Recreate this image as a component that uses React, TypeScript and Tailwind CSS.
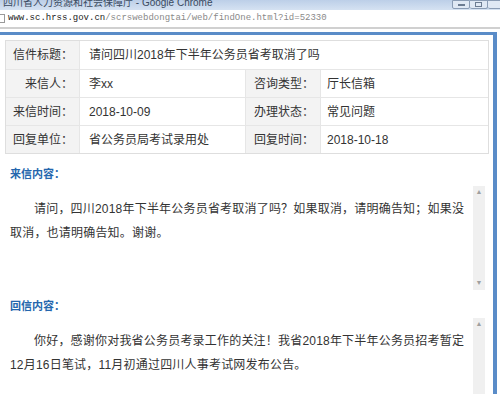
import React from 'react';

interface InfoRow {
  label: string;
  value: string;
  label2?: string;
  value2?: string;
}

const rows: InfoRow[] = [
  { label: '信件标题：', value: '请问四川2018年下半年公务员省考取消了吗' },
  { label: '来信人：', value: '李xx', label2: '咨询类型：', value2: '厅长信箱' },
  { label: '来信时间：', value: '2018-10-09', label2: '办理状态：', value2: '常见问题' },
  { label: '回复单位：', value: '省公务员局考试录用处', label2: '回复时间：', value2: '2018-10-18' },
];

const Scrollbar: React.FC<{ full?: boolean }> = ({ full }) => (
  <div className="w-[12px] bg-[#f0f0f0] flex flex-col justify-between items-center">
    <span className="text-[7px] leading-[10px] text-[#a0a0a0] mt-[1px]">▲</span>
    {!full && <span className="text-[7px] leading-[10px] text-[#a0a0a0] mb-[2px]">▼</span>}
  </div>
);

const Section: React.FC<{ title: string; text: string; full?: boolean }> = ({ title, text, full }) => (
  <div className="flex flex-col pl-[10px] pr-[8px]">
    <div className="text-[11px] leading-[12px] font-bold text-[#2466ad]">{title}</div>
    <div className={`flex gap-[3px] mt-[6px] ${full ? 'h-[90px]' : 'h-[104px]'}`}>
      <p className="w-[460px] text-[12px] leading-[24px] tracking-[0.2px] indent-[24px] pt-[11px] text-[#333]">
        {text}
      </p>
      <Scrollbar full={full} />
    </div>
  </div>
);

const App: React.FC = () => {
  return (
    <div className="w-[500px] h-[394px] overflow-hidden bg-white font-['Liberation_Sans','Noto_Sans_CJK_SC',sans-serif] text-[#333]">
      {/* Window title bar */}
      <div className="h-[10px] bg-gradient-to-b from-[#bccfe8] to-[#d5e2f2] flex justify-between overflow-hidden">
        <span className="text-[10px] leading-[12px] text-[#3a4a60] pl-[3px] mt-[-3px] whitespace-nowrap">
          四川省人力资源和社会保障厅 - Google Chrome
        </span>
        <div className="flex mr-[-6px]">
          <div className="w-[18px] h-[9px] border border-[#8a9cb5] bg-[#dfe8f4] rounded-b-[2px] flex justify-center items-end">
            <div className="w-[7px] h-[2px] bg-[#6c7c92] mb-[2px]" />
          </div>
          <div className="w-[18px] h-[9px] border border-l-0 border-[#8a9cb5] bg-[#dfe8f4] rounded-b-[2px] flex justify-center items-center">
            <div className="w-[7px] h-[5px] border border-[#6c7c92]" />
          </div>
          <div className="w-[18px] h-[9px] border border-l-0 border-[#8a9cb5] bg-[#dfe8f4] rounded-b-[2px]" />
        </div>
      </div>

      {/* Address bar */}
      <div className="h-[19px] bg-white flex items-center border-b-[2px] border-[#d0d0d0]">
        <div className="w-[5px] h-[9px] border border-l-0 border-[#9a9a9a]" />
        <span className="ml-[3px] font-['Liberation_Mono',monospace] text-[9px] whitespace-nowrap">
          <span className="text-[#222]">www.sc.hrss.gov.cn</span>
          <span className="text-[#8a8a8a]">/scrswebdongtai/web/findOne.html?id=52330</span>
        </span>
      </div>

      {/* Page frame */}
      <div className="mt-[3px] mr-[3px] border-t-[3px] border-r-[4px] border-[#5a8cc8] h-[400px]">
        <div className="ml-[5px] mr-[4px] mt-[5px] border border-[#dedede] grid grid-cols-[73px_166px_75px_1fr] text-[12px]">
          {rows.map((row, i) => (
            <React.Fragment key={i}>
              <div className={`h-[28px] bg-[#f3f3f3] flex items-center justify-end pr-[6px] ${i > 0 ? 'border-t border-[#e6e6e6]' : ''}`}>
                {row.label}
              </div>
              {row.label2 ? (
                <>
                  <div className={`h-[28px] flex items-center pl-[9px] border-l border-[#e6e6e6] ${i > 0 ? 'border-t' : ''}`}>
                    {row.value}
                  </div>
                  <div className={`h-[28px] bg-[#f3f3f3] flex items-center justify-end pr-[6px] border-l border-[#e6e6e6] ${i > 0 ? 'border-t' : ''}`}>
                    {row.label2}
                  </div>
                  <div className={`h-[28px] flex items-center pl-[6px] border-l border-[#e6e6e6] ${i > 0 ? 'border-t' : ''}`}>
                    {row.value2}
                  </div>
                </>
              ) : (
                <div className="col-span-3 h-[28px] flex items-center pl-[9px] border-l border-[#e6e6e6]">
                  {row.value}
                </div>
              )}
            </React.Fragment>
          ))}
        </div>

        <div className="mt-[14px]">
          <Section
            title="来信内容："
            text="请问，四川2018年下半年公务员省考取消了吗？如果取消，请明确告知；如果没取消，也请明确告知。谢谢。"
          />
        </div>
        <div className="mt-[10px]">
          <Section
            full
            title="回信内容："
            text="你好，感谢你对我省公务员考录工作的关注！我省2018年下半年公务员招考暂定12月16日笔试，11月初通过四川人事考试网发布公告。"
          />
        </div>
      </div>
    </div>
  );
};

export default App;
